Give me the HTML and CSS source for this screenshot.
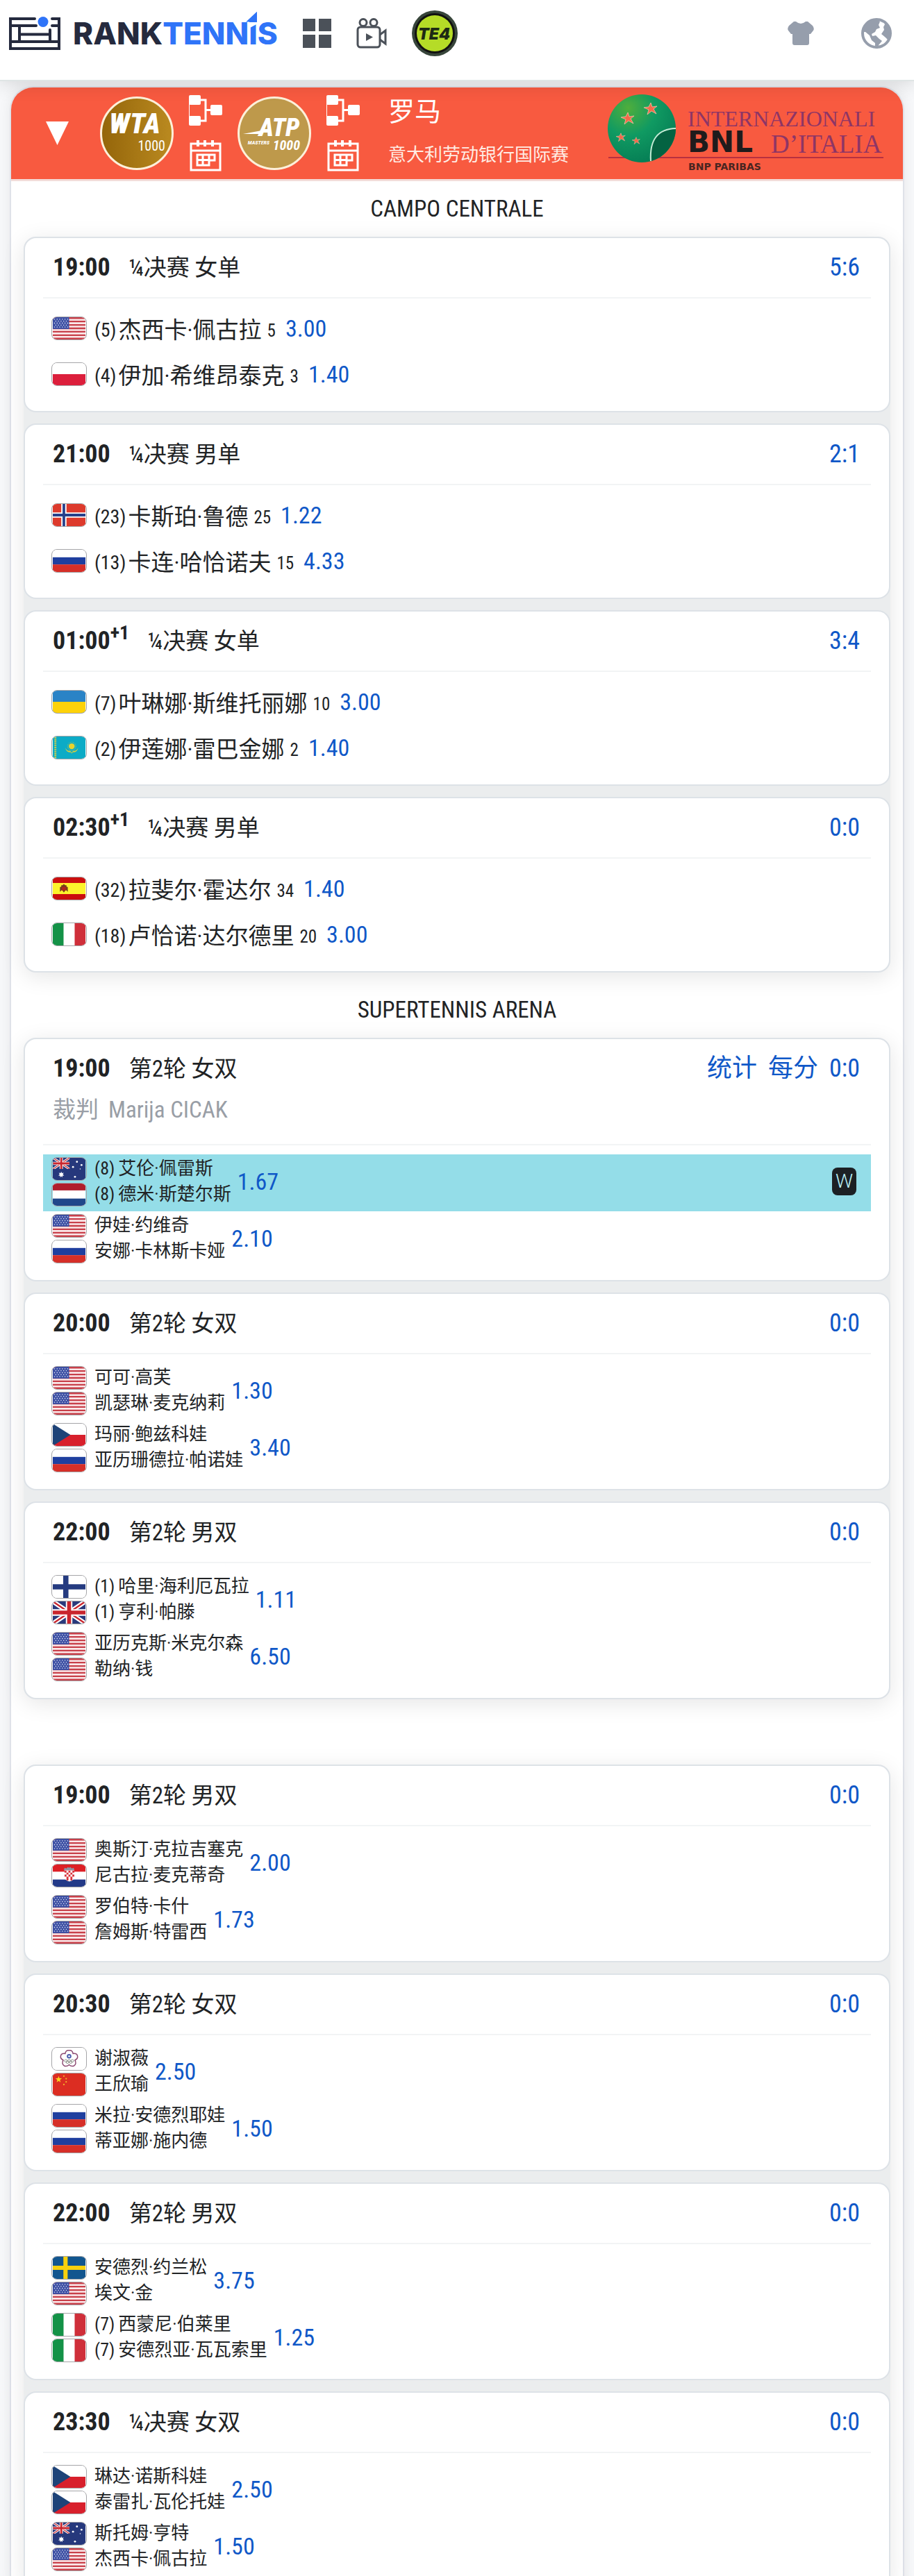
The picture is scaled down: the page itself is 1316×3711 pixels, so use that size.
FILE: index.html
```
<!DOCTYPE html>
<html lang="zh-CN">
<head>
    <meta charset="UTF-8">
    <meta name="viewport" content="width=device-width, initial-scale=1">
    <title>RankTennis - 罗马 赛程</title>
    <link rel="stylesheet" href="styles.css">
</head>
<body>

    <!-- 国旗和图标 -->
    <svg class="defs" aria-hidden="true">
        <symbol id="usa" viewBox="0 0 50 34">
            <rect width="50" height="34" fill="#fbe9ea"/>
            <path d="M0 1.3h50M0 6.5h50M0 11.8h50M0 17h50M0 22.2h50M0 27.5h50M0 32.7h50" stroke="#c8404a" stroke-width="2.6"/>
            <rect width="25" height="18" fill="#3c4fa3"/>
            <path d="M2 3h22M4 6h20M2 9h22M4 12h20M2 15h22" stroke="#dfe4f6" stroke-width="1.4" stroke-dasharray="1.4 2.6"/>
        </symbol>
        <symbol id="pol" viewBox="0 0 50 34"><rect width="50" height="34" fill="#fff"/><rect y="17" width="50" height="17" fill="#dc1f3c"/></symbol>
        <symbol id="nor" viewBox="0 0 50 34">
            <rect width="50" height="34" fill="#dd3a2c"/>
            <path d="M17 0v34M0 17h50" stroke="#fff" stroke-width="8"/>
            <path d="M17 0v34M0 17h50" stroke="#27408b" stroke-width="4"/>
        </symbol>
        <symbol id="rus" viewBox="0 0 50 34"><rect width="50" height="34" fill="#fff"/><rect y="11.5" width="50" height="11" fill="#1f3f9f"/><rect y="22.5" width="50" height="11.5" fill="#d62f28"/></symbol>
        <symbol id="ukr" viewBox="0 0 50 34"><rect width="50" height="34" fill="#2a83c6"/><rect y="17" width="50" height="17" fill="#fdd20a"/></symbol>
        <symbol id="kaz" viewBox="0 0 50 34">
            <rect width="50" height="34" fill="#0cabc6"/>
            <path d="M4 1v32" stroke="#c9cc4a" stroke-width="3" stroke-dasharray="2 1"/>
            <circle cx="29" cy="15" r="4.5" fill="#e9d32c"/>
            <circle cx="29" cy="15" r="6.3" fill="none" stroke="#d8cf3a" stroke-dasharray="1 1.4"/>
            <path d="M19 17q3 6 8 5l2 3 2-3q5 1 8-5-2 8-8 7l-2 2-2-2q-6 1-8-7z" fill="#d8cf3a"/>
        </symbol>
        <symbol id="esp" viewBox="0 0 50 34">
            <rect width="50" height="34" fill="#cb0e0e"/><rect y="8.500" width="50" height="17" fill="#fcf32c"/>
            <path d="M11 22V15l2-1v-2h2l2-2 2 2h2v2l2 1v7l-3-3-3 4-3-4z" fill="#7a3b1c"/>
            <path d="M14 15h6v5h-6z" fill="#b3261b"/>
        </symbol>
        <symbol id="ita" viewBox="0 0 50 34"><rect width="50" height="34" fill="#fff"/><rect width="16.5" height="34" fill="#149247"/><rect x="33.500" width="16.5" height="34" fill="#cf2f3a"/></symbol>
        <symbol id="uk" viewBox="0 0 50 34">
            <rect width="50" height="34" fill="#2a3a7c"/>
            <path d="M0 0l50 34M50 0L0 34" stroke="#fff" stroke-width="7"/>
            <path d="M0 0l50 34M50 0L0 34" stroke="#c9252d" stroke-width="2.500"/>
            <path d="M25 0v34M0 17h50" stroke="#fff" stroke-width="10"/>
            <path d="M25 0v34M0 17h50" stroke="#c9252d" stroke-width="6"/>
        </symbol>
        <symbol id="aus" viewBox="0 0 50 34">
            <rect width="50" height="34" fill="#26387c"/>
            <use href="#uk" width="26" height="17"/>
            <g fill="#fff">
                <path d="M13 21l1 2.500 2.700-.6-1.300 2.300 2 1.800-2.700.4.100 2.600-1.800-1.800-1.800 1.800.100-2.600-2.700-.4 2-1.800-1.300-2.300 2.700.6z"/>
                <circle cx="37" cy="6" r="1.500"/><circle cx="31" cy="14" r="1.500"/><circle cx="44" cy="11" r="1.500"/><circle cx="34" cy="29" r="1.500"/><circle cx="42" cy="17" r=".8"/>
            </g>
        </symbol>
        <symbol id="ned" viewBox="0 0 50 34"><rect width="50" height="34" fill="#fff"/><rect width="50" height="10.500" fill="#b01e2c"/><rect y="23" width="50" height="11" fill="#20478a"/></symbol>
        <symbol id="cze" viewBox="0 0 50 34"><rect width="50" height="34" fill="#fff"/><rect y="17" width="50" height="17" fill="#d8202c"/><path d="M0 0l27 17L0 34z" fill="#1e4378"/></symbol>
        <symbol id="fin" viewBox="0 0 50 34"><rect width="50" height="34" fill="#fff"/><path d="M20 0v34M0 17h50" stroke="#253b80" stroke-width="8"/></symbol>
        <symbol id="cro" viewBox="0 0 50 34">
            <rect width="50" height="34" fill="#fff"/><rect width="50" height="11" fill="#dd1f26"/><rect y="23" width="50" height="11" fill="#233a88"/>
            <path d="M17 9l1-4 3 1 2-2 2 1 2-1 2 2 3-1 1 4z" fill="#8c93a5"/>
            <path d="M18 9h15v10q0 5-7.500 7Q18 24 18 19z" fill="#fff"/>
            <path d="M18 11h15M21 14h12M18 17h15M21 20h12M21 23h9" stroke="#d8343c" stroke-width="3" stroke-dasharray="3 3"/>
        </symbol>
        <symbol id="tpe" viewBox="0 0 50 34">
            <rect width="50" height="34" fill="#fff"/>
            <path d="M25 4q5-1 6 5 7-1 7 5 0 3-4 5 3 6-2 9-4 1-7-2-3 3-7 2-5-3-2-9-4-2-4-5 0-6 7-5 1-6 6-5z" fill="none" stroke="#8d4a72" stroke-width="1.600"/>
            <circle cx="25" cy="13" r="3.500" fill="#4c5fb0"/><circle cx="25" cy="13" r="1.300" fill="#fff"/>
            <g fill="none" stroke="#8a8f86"><circle cx="20" cy="20" r="2"/><circle cx="25" cy="20" r="2"/><circle cx="30" cy="20" r="2"/><circle cx="22.500" cy="22" r="2"/><circle cx="27.500" cy="22" r="2"/></g>
        </symbol>
        <symbol id="chn" viewBox="0 0 50 34">
            <rect width="50" height="34" fill="#dc2d22"/>
            <path d="M9 4l1.300 3.500H14l-3 2.300 1.100 3.700L9 11.300l-3.100 2.200L7 9.800 4 7.500h3.700z" fill="#fbd51f"/>
            <g fill="#f3b32a"><circle cx="17" cy="4" r="1.200"/><circle cx="20.500" cy="8" r="1.200"/><circle cx="20.500" cy="13" r="1.200"/><circle cx="17" cy="17" r="1.200"/></g>
        </symbol>
        <symbol id="swe" viewBox="0 0 50 34"><rect width="50" height="34" fill="#12568f"/><path d="M19.500 0v34M0 17h50" stroke="#f8d10e" stroke-width="6.500"/></symbol>

        <symbol id="draw" viewBox="0 0 48 44">
            <rect width="17" height="14" rx="2"/><rect y="30" width="17" height="14" rx="2"/><rect x="31" y="14" width="17" height="15" rx="2"/>
            <path d="M17 7h7v30h-7M24 21.500h8" fill="none" stroke="#fff" stroke-width="3"/>
            <path d="M.5 12v20" stroke="#fff"/>
        </symbol>
        <symbol id="calendar" viewBox="0 0 46 46">
            <path d="M2 6h42v38H2zM2 16h42" fill="none" stroke="#fff" stroke-width="3"/>
            <path d="M12 1v9M22 1v9M33 1v9" stroke="#fff" stroke-width="4"/>
            <path d="M11 22h25v8h-8v7H11zM11 29.500h17M19 22v15M28 22v8" fill="none" stroke="#fff" stroke-width="3"/>
        </symbol>
    </svg>

    <header class="topbar">
        <a class="brand" href="#">
            <svg width="74" height="48" viewBox="0 0 74 48" fill="none" stroke="#252a3e" stroke-width="4" stroke-linecap="round">
                <path d="M37 3H2v43h70V3H62M2 13h37M62 13h10M2 36h70M15 13v23M15 25.500h44M59 19v17"/>
                <circle cx="49" cy="7.500" r="7.500" fill="#2f74f8" stroke="none"/>
            </svg>
            <span class="brand-name">RANK<span class="brand-blue">TENN<span class="brand-i">I</span>S</span></span>
        </a>
        <a class="top-icon" href="#" aria-label="菜单">
            <svg width="41" height="42" viewBox="0 0 41 42" fill="#4b5159"><path d="M0 0h18v18H0zM23 0h18v18H23zM0 23h18v19H0zM23 23h18v19H23z"/></svg>
        </a>
        <a class="top-icon" href="#" aria-label="视频">
            <svg width="44" height="44" viewBox="0 0 44 44" fill="none" stroke="#4b5159" stroke-width="3">
                <circle cx="10" cy="6.500" r="5"/><circle cx="25" cy="6.500" r="5"/>
                <rect x="2" y="13" width="32" height="29" rx="4"/>
                <path d="M34 24l8-6v19l-8-6"/>
                <path d="M14 22l10 5.500L14 33z" fill="#4b5159" stroke="none"/>
            </svg>
        </a>
        <a class="top-icon" href="#" aria-label="TE4">
            <svg width="66" height="66" viewBox="0 0 66 66">
                <circle cx="33" cy="33" r="33" fill="#37453a"/><circle cx="33" cy="33" r="29" fill="#111"/><circle cx="33" cy="33" r="26" fill="#b5dc27"/>
                <text x="32" y="42" class="te4">TE4</text>
            </svg>
        </a>
        <div class="top-right">
            <a href="#" aria-label="主题">
                <svg width="38" height="34" viewBox="0 0 38 34" fill="#969eac"><path d="M12 0q7 6 14 0h3l7 6q3 4 1 7l-4 5h-2v13q0 3-3 3H10q-3 0-3-3V18H5l-4-5q-2-3 1-7l7-6z"/></svg>
            </a>
            <a href="#" aria-label="语言">
                <svg width="44" height="44" viewBox="0 0 44 44"><circle cx="22" cy="22" r="20" fill="#fff" stroke="#969eac" stroke-width="4"/><path d="M3 20Q5 4 22 2l5 3-2 5 2 4-5 2-2 4-5 3 1 3 5-1 5 5 4 3-5 6-1 5-4-1 0-7-5-4-3-7-6-5zM33 5q8 6 9 16l-2 12-5-5-6-5 4-6-1-4 2-4z" fill="#969eac"/></svg>
            </a>
        </div>
    </header>

    <main class="tour">
        <!-- 赛事标题 -->
        <div class="tour-head">
            <button class="toggle" aria-label="收起"></button>
            <svg class="level" viewBox="0 0 106 106">
                <defs><linearGradient id="gold"><stop offset="0" stop-color="#94650a"/><stop offset="1" stop-color="#ba8a20"/></linearGradient></defs>
                <circle cx="53" cy="53" r="51.500" fill="url(#gold)" stroke="#fdf0da" stroke-width="3"/>
                <text x="50" y="53" class="wta">WTA</text>
                <text x="94" y="78" class="wta-num">1000</text>
            </svg>
            <div class="tour-links">
                <a href="#" aria-label="签表"><svg width="48" height="44" fill="#fff"><use href="#draw"/></svg></a>
                <a href="#" aria-label="赛历"><svg width="46" height="46"><use href="#calendar"/></svg></a>
            </div>
            <svg class="level" viewBox="0 0 106 106">
                <circle cx="53" cy="53" r="51.500" fill="#be994b" stroke="#fdf0da" stroke-width="3"/>
                <text x="60" y="57" class="atp">ATP</text>
                <path d="M8 54l32-6-6 6z" fill="#fff"/>
                <text x="46" y="69" class="atp-small">MASTERS</text>
                <text x="90" y="77" class="atp-num">1000</text>
            </svg>
            <div class="tour-links">
                <a href="#" aria-label="签表"><svg width="48" height="44" fill="#fff"><use href="#draw"/></svg></a>
                <a href="#" aria-label="赛历"><svg width="46" height="46"><use href="#calendar"/></svg></a>
            </div>
            <div class="tour-name">
                <h1>罗马</h1>
                <p>意大利劳动银行国际赛</p>
            </div>
            <svg class="tour-logo" width="398" height="112" viewBox="0 0 398 112">
                <defs>
                    <radialGradient id="ball" cx=".3" cy=".2" r=".9"><stop offset="0" stop-color="#4fae3c"/><stop offset=".45" stop-color="#109a62"/><stop offset="1" stop-color="#047a53"/></radialGradient>
                    <path id="star" d="M0-9l2 6 7-1-5 4 4 7-7-4-6 5 2-7-7-3 7-1z"/>
                </defs>
                <path d="M1 91h396" stroke="#b83040" stroke-width="2"/>
                <circle cx="49" cy="49" r="49" fill="url(#ball)"/>
                <path d="M62 96Q59 50 98 49a49 49 0 0 1-36 47z" fill="#046342"/>
                <path d="M62 96Q59 50 98 49" fill="none" stroke="#c4ecd6" stroke-width="2"/>
                <g fill="#f4694a" stroke="#f6cdb4" stroke-width=".7">
                    <use href="#star" x="62" y="21"/><use href="#star" x="29" y="35"/>
                    <use href="#star" transform="translate(19 62) scale(.7)"/><use href="#star" transform="translate(41 67) scale(.6)"/>
                </g>
                <text x="115" y="46" class="bnl-serif">INTERNAZIONALI</text>
                <text x="115" y="83" class="bnl-bold">BNL</text>
                <text x="235" y="84" class="bnl-serif bnl-large">D’ITALIA</text>
                <text x="116" y="109" class="bnl-paribas">BNP PARIBAS</text>
            </svg>
        </div>

        <h2 class="court">CAMPO CENTRALE</h2>
        <div class="matches">
            <section class="match">
                <div class="match-head"><b class="time">19:00</b><span class="round">¼决赛 女单</span><a class="score" href="#">5:6</a></div>
                <div class="player"><svg class="flag"><use href="#usa"/></svg><span class="seed">(5)</span><span>杰西卡·佩古拉</span><span class="rank">5</span><a class="odds" href="#">3.00</a></div>
                <div class="player"><svg class="flag"><use href="#pol"/></svg><span class="seed">(4)</span><span>伊加·希维昂泰克</span><span class="rank">3</span><a class="odds" href="#">1.40</a></div>
            </section>
            <section class="match">
                <div class="match-head"><b class="time">21:00</b><span class="round">¼决赛 男单</span><a class="score" href="#">2:1</a></div>
                <div class="player"><svg class="flag"><use href="#nor"/></svg><span class="seed">(23)</span><span>卡斯珀·鲁德</span><span class="rank">25</span><a class="odds" href="#">1.22</a></div>
                <div class="player"><svg class="flag"><use href="#rus"/></svg><span class="seed">(13)</span><span>卡连·哈恰诺夫</span><span class="rank">15</span><a class="odds" href="#">4.33</a></div>
            </section>
            <section class="match">
                <div class="match-head"><b class="time">01:00<sup>+1</sup></b><span class="round">¼决赛 女单</span><a class="score" href="#">3:4</a></div>
                <div class="player"><svg class="flag"><use href="#ukr"/></svg><span class="seed">(7)</span><span>叶琳娜·斯维托丽娜</span><span class="rank">10</span><a class="odds" href="#">3.00</a></div>
                <div class="player"><svg class="flag"><use href="#kaz"/></svg><span class="seed">(2)</span><span>伊莲娜·雷巴金娜</span><span class="rank">2</span><a class="odds" href="#">1.40</a></div>
            </section>
            <section class="match">
                <div class="match-head"><b class="time">02:30<sup>+1</sup></b><span class="round">¼决赛 男单</span><a class="score" href="#">0:0</a></div>
                <div class="player"><svg class="flag"><use href="#esp"/></svg><span class="seed">(32)</span><span>拉斐尔·霍达尔</span><span class="rank">34</span><a class="odds" href="#">1.40</a></div>
                <div class="player"><svg class="flag"><use href="#ita"/></svg><span class="seed">(18)</span><span>卢恰诺·达尔德里</span><span class="rank">20</span><a class="odds" href="#">3.00</a></div>
            </section>
        </div>

        <h2 class="court">SUPERTENNIS ARENA</h2>
        <div class="matches">
            <section class="match doubles">
                <div class="match-head">
                    <b class="time">19:00</b><span class="round">第2轮 女双</span>
                    <a class="stat" href="#">统计</a><a class="stat" href="#">每分</a><a class="score" href="#">0:0</a>
                    <p class="umpire"><span>裁判</span><span>Marija CICAK</span></p>
                </div>
                <div class="pair winner">
                    <div class="flags"><svg class="flag"><use href="#aus"/></svg><svg class="flag"><use href="#ned"/></svg></div>
                    <div class="names"><span><i>(8)</i>艾伦·佩雷斯</span><span><i>(8)</i>德米·斯楚尔斯</span></div>
                    <a class="odds" href="#">1.67</a>
                    <span class="win">W</span>
                </div>
                <div class="pair">
                    <div class="flags"><svg class="flag"><use href="#usa"/></svg><svg class="flag"><use href="#rus"/></svg></div>
                    <div class="names"><span>伊娃·约维奇</span><span>安娜·卡林斯卡娅</span></div>
                    <a class="odds" href="#">2.10</a>
                </div>
            </section>
            <section class="match doubles">
                <div class="match-head"><b class="time">20:00</b><span class="round">第2轮 女双</span><a class="score" href="#">0:0</a></div>
                <div class="pair">
                    <div class="flags"><svg class="flag"><use href="#usa"/></svg><svg class="flag"><use href="#usa"/></svg></div>
                    <div class="names"><span>可可·高芙</span><span>凯瑟琳·麦克纳莉</span></div>
                    <a class="odds" href="#">1.30</a>
                </div>
                <div class="pair">
                    <div class="flags"><svg class="flag"><use href="#cze"/></svg><svg class="flag"><use href="#rus"/></svg></div>
                    <div class="names"><span>玛丽·鲍兹科娃</span><span>亚历珊德拉·帕诺娃</span></div>
                    <a class="odds" href="#">3.40</a>
                </div>
            </section>
            <section class="match doubles">
                <div class="match-head"><b class="time">22:00</b><span class="round">第2轮 男双</span><a class="score" href="#">0:0</a></div>
                <div class="pair">
                    <div class="flags"><svg class="flag"><use href="#fin"/></svg><svg class="flag"><use href="#uk"/></svg></div>
                    <div class="names"><span><i>(1)</i>哈里·海利厄瓦拉</span><span><i>(1)</i>亨利·帕滕</span></div>
                    <a class="odds" href="#">1.11</a>
                </div>
                <div class="pair">
                    <div class="flags"><svg class="flag"><use href="#usa"/></svg><svg class="flag"><use href="#usa"/></svg></div>
                    <div class="names"><span>亚历克斯·米克尔森</span><span>勒纳·钱</span></div>
                    <a class="odds" href="#">6.50</a>
                </div>
            </section>
        </div>

        <!-- 球场名为空 -->
        <h2 class="court"></h2>
        <div class="matches">
            <section class="match doubles">
                <div class="match-head"><b class="time">19:00</b><span class="round">第2轮 男双</span><a class="score" href="#">0:0</a></div>
                <div class="pair">
                    <div class="flags"><svg class="flag"><use href="#usa"/></svg><svg class="flag"><use href="#cro"/></svg></div>
                    <div class="names"><span>奥斯汀·克拉吉塞克</span><span>尼古拉·麦克蒂奇</span></div>
                    <a class="odds" href="#">2.00</a>
                </div>
                <div class="pair">
                    <div class="flags"><svg class="flag"><use href="#usa"/></svg><svg class="flag"><use href="#usa"/></svg></div>
                    <div class="names"><span>罗伯特·卡什</span><span>詹姆斯·特雷西</span></div>
                    <a class="odds" href="#">1.73</a>
                </div>
            </section>
            <section class="match doubles">
                <div class="match-head"><b class="time">20:30</b><span class="round">第2轮 女双</span><a class="score" href="#">0:0</a></div>
                <div class="pair">
                    <div class="flags"><svg class="flag"><use href="#tpe"/></svg><svg class="flag"><use href="#chn"/></svg></div>
                    <div class="names"><span>谢淑薇</span><span>王欣瑜</span></div>
                    <a class="odds" href="#">2.50</a>
                </div>
                <div class="pair">
                    <div class="flags"><svg class="flag"><use href="#rus"/></svg><svg class="flag"><use href="#rus"/></svg></div>
                    <div class="names"><span>米拉·安德烈耶娃</span><span>蒂亚娜·施内德</span></div>
                    <a class="odds" href="#">1.50</a>
                </div>
            </section>
            <section class="match doubles">
                <div class="match-head"><b class="time">22:00</b><span class="round">第2轮 男双</span><a class="score" href="#">0:0</a></div>
                <div class="pair">
                    <div class="flags"><svg class="flag"><use href="#swe"/></svg><svg class="flag"><use href="#usa"/></svg></div>
                    <div class="names"><span>安德烈·约兰松</span><span>埃文·金</span></div>
                    <a class="odds" href="#">3.75</a>
                </div>
                <div class="pair">
                    <div class="flags"><svg class="flag"><use href="#ita"/></svg><svg class="flag"><use href="#ita"/></svg></div>
                    <div class="names"><span><i>(7)</i>西蒙尼·伯莱里</span><span><i>(7)</i>安德烈亚·瓦瓦索里</span></div>
                    <a class="odds" href="#">1.25</a>
                </div>
            </section>
            <section class="match doubles">
                <div class="match-head"><b class="time">23:30</b><span class="round">¼决赛 女双</span><a class="score" href="#">0:0</a></div>
                <div class="pair">
                    <div class="flags"><svg class="flag"><use href="#cze"/></svg><svg class="flag"><use href="#cze"/></svg></div>
                    <div class="names"><span>琳达·诺斯科娃</span><span>泰雷扎·瓦伦托娃</span></div>
                    <a class="odds" href="#">2.50</a>
                </div>
                <div class="pair">
                    <div class="flags"><svg class="flag"><use href="#aus"/></svg><svg class="flag"><use href="#usa"/></svg></div>
                    <div class="names"><span>斯托姆·亨特</span><span>杰西卡·佩古拉</span></div>
                    <a class="odds" href="#">1.50</a>
                </div>
            </section>
        </div>
    </main>
</body>
</html>
```
FILE: styles.css
```
* { box-sizing: border-box; }
body {
    margin: 0;
    background: #f7f8fa;
    color: #212325;
    font-family: "Roboto Condensed", Roboto, "Noto Sans CJK SC", sans-serif;
    font-size: 33px;
}
a { color: #0f58c8; text-decoration: none; }
h1, h2, p { margin: 0; font-weight: 400; }
svg { display: block; flex: none; }
.defs { position: absolute; width: 0; height: 0; }

/* 顶部导航 */
.topbar {
    position: relative;
    z-index: 1;
    display: flex;
    align-items: center;
    height: 117px;
    padding: 0 32px 20px 13px;
    background: #fff;
    border-bottom: 2px solid #dfe5e5;
    box-shadow: 0 4px 26px rgba(0, 0, 0, .14);
}
.brand { display: flex; align-items: center; gap: 18px; }
.brand-name { color: #252a3e; font: 800 44px/48px Inter, sans-serif; }
.brand-blue { color: #2f74f8; }
.brand-i { position: relative; }
/* 字母 I 上的斜角 */
.brand-i::after {
    content: "";
    position: absolute;
    left: -4px;
    top: -4px;
    width: 16px;
    height: 24px;
    background: linear-gradient(#2f74f8, #2f74f8) 0 0 / 16px 15px no-repeat #fff;
    clip-path: polygon(0 62%, 100% 0, 100% 75%, 30% 100%, 30% 62%);
}
.top-icon { margin-left: 36px; }
.top-right { display: flex; align-items: center; gap: 68px; margin-left: auto; }
.te4 { fill: #1d2a14; font: italic 900 23px Inter, sans-serif; text-anchor: middle; }

/* 赛事 */
.tour {
    margin: 7px 14px 0;
    background: #fff;
    border: 2px solid #dfe2e9;
    border-bottom: 0;
    border-radius: 34px 34px 0 0;
    box-shadow: 0 0 18px rgba(0, 0, 0, .07);
}
.tour-head {
    display: flex;
    align-items: center;
    height: 135px;
    padding: 0 27px 0 50px;
    background: #f85a40;
    border-bottom: 3px solid #f2dcd9;
    border-radius: 32px 32px 0 0;
    color: #fff;
}
.toggle {
    width: 33px;
    height: 34px;
    margin-right: 45px;
    padding: 0;
    border: 0;
    background: #fff;
    clip-path: polygon(0 0, 100% 0, 50% 100%);
}
.level { width: 106px; height: 106px; margin-right: 22px; }
.tour-links { display: flex; flex-direction: column; align-items: center; gap: 20px; margin-right: 22px; }
.tour-name { margin-left: 19px; }
.tour-name h1 { font-size: 38px; line-height: 62px; }
.tour-name p { font-size: 26px; line-height: 62px; color: #ffece4; }
.tour-name + svg { margin-left: auto; }
.level text { fill: #fff; font-family: "Roboto Condensed", Roboto, sans-serif; }
.level .wta { font-size: 41px; font-weight: 900; font-style: italic; text-anchor: middle; }
.level .wta-num { font-size: 20px; text-anchor: end; }
.level .atp { font: italic 900 36px "Roboto Condensed", Roboto, sans-serif; text-anchor: middle; }
.level .atp-small { font-size: 8px; font-style: italic; font-weight: 700; text-anchor: end; }
.level .atp-num { font-size: 20px; font-style: italic; font-weight: 700; text-anchor: end; }
.bnl-serif { fill: #8e3566; font: 32px "Liberation Serif", serif; }
.bnl-large { font-size: 37px; }
.bnl-bold { fill: #1f1b1c; font: bold 42px "DejaVu Sans", sans-serif; }
.bnl-paribas { fill: #4a2521; font: bold 14px "DejaVu Sans", sans-serif; }

/* 球场 */
.court { height: 80px; line-height: 80px; font-size: 33px; text-align: center; }
.matches {
    display: flex;
    flex-direction: column;
    gap: 16px;
    margin: 0 18px 14px;
    background: #ebedee;
    border-radius: 18px;
    box-shadow: 0 6px 32px rgba(0, 0, 0, .1);
}
.match { padding: 0 26px 20px; background: #fff; border: 2px solid #dde2e7; border-radius: 18px; }
.match-head {
    display: flex;
    flex-wrap: wrap;
    align-items: center;
    margin-bottom: 10px;
    padding: 0 16px 0 14px;
    border-bottom: 2px solid #f2f4f5;
    line-height: 85px;
}
.time { margin-right: 27px; font-size: 36px; }
.time sup { font-size: 28px; line-height: 0; vertical-align: 14px; }
.round { margin-right: auto; }
.score, .stat { font-size: 36px; }
.stat { margin-right: 16px; }
.umpire { display: flex; gap: 14px; width: 100%; color: #999ea6; line-height: 34px; padding-bottom: 32px; }
.flag { width: 51px; height: 34px; border: 1px solid #a5a5a8; border-radius: 8px; }

/* 单打 */
.player { display: flex; align-items: center; height: 66px; padding-left: 12px; }
.seed { margin: 4px 3px 0 11px; font-size: 28px; }
.rank { margin: 6px 14px 0 8px; font-size: 25px; }
.odds { font-size: 34px; }

/* 双打 */
.doubles { padding-bottom: 17px; }
.doubles .match-head { margin-bottom: 13px; }
.pair { display: flex; align-items: center; height: 82px; padding: 0 21px 4px 12px; }
.flags { display: grid; gap: 3px; }
.names { display: grid; grid-auto-rows: 37px; margin: 0 9px 0 11px; font-size: 26px; line-height: 37px; }
.names i { margin-right: 5px; font-style: normal; }
.winner { background: #94dde8; }
.win {
    width: 35px;
    height: 40px;
    margin-left: auto;
    background: #1c2024;
    border-radius: 8px;
    color: #b9eef5;
    font: 300 28px/40px Roboto, sans-serif;
    text-align: center;
}
```
